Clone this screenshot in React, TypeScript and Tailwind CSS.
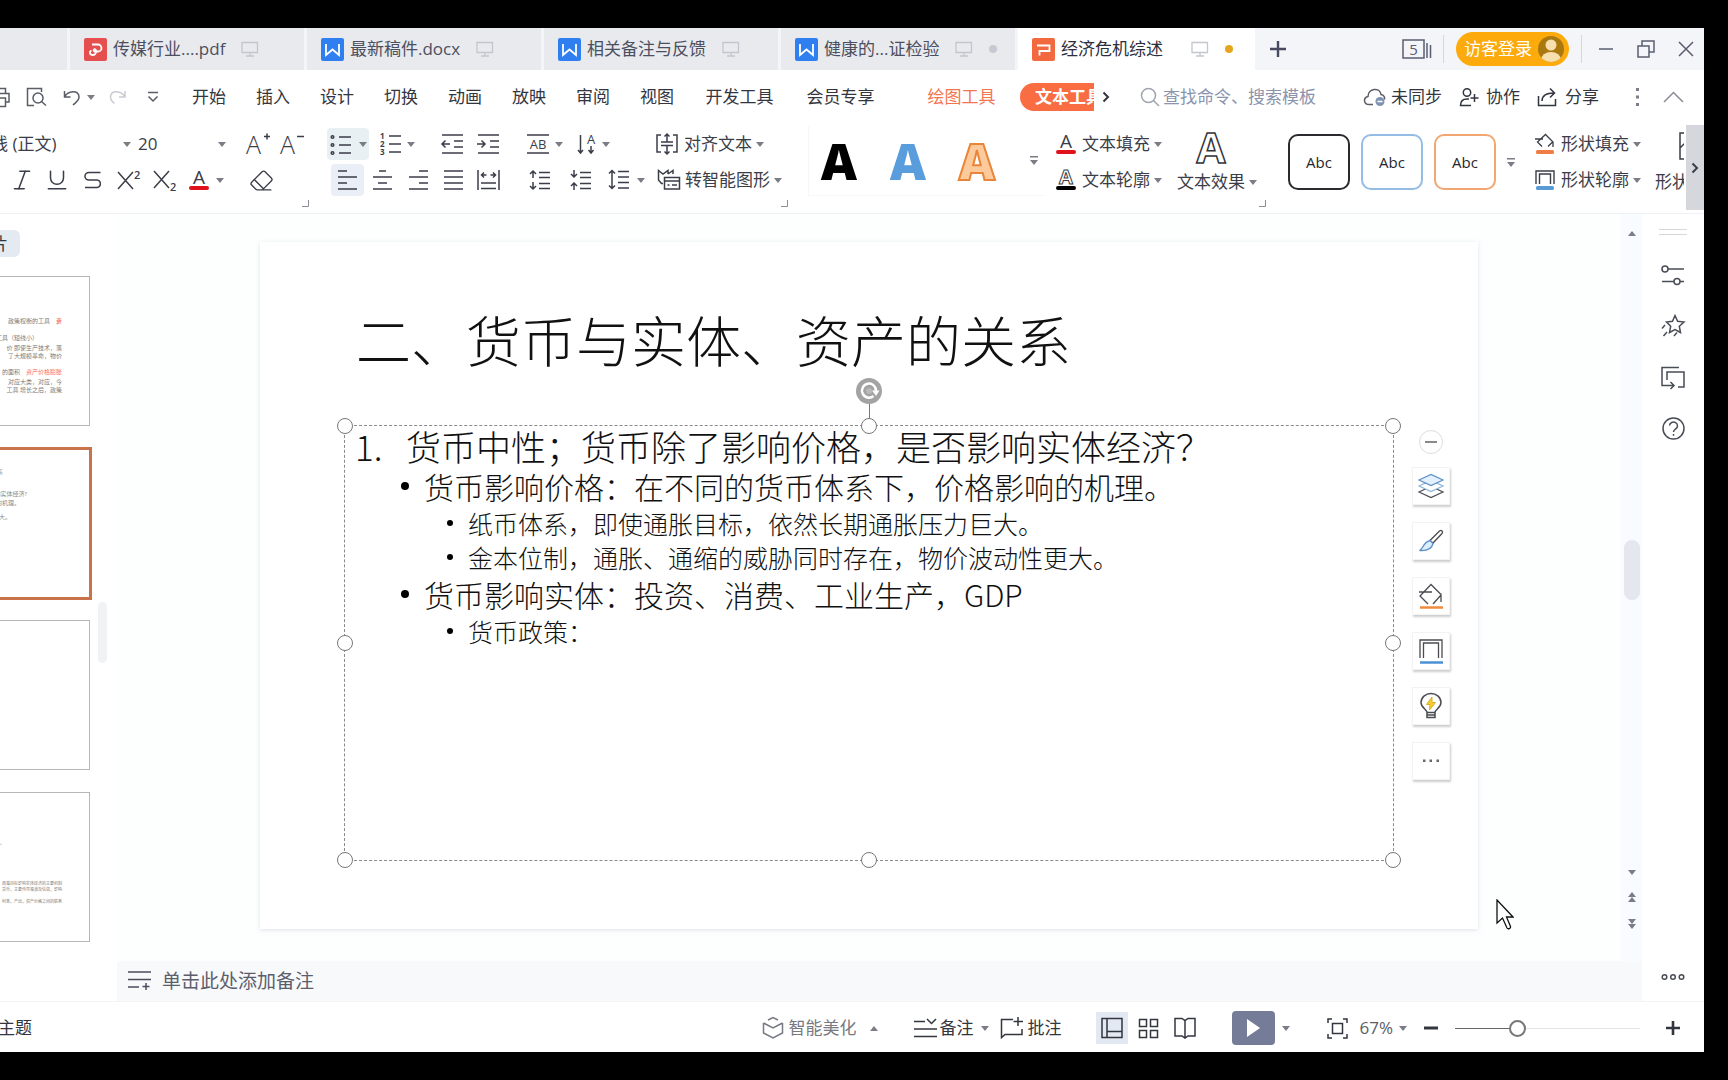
import React from "react";
import { Italic, Underline, Eraser } from "lucide-react";

type Kids = { children?: React.ReactNode };

function Ico({ w = 22, h = 22, sw = 1.5, children }: Kids & { w?: number; h?: number; sw?: number }) {
  return (
    <svg width={w} height={h} viewBox={`0 0 ${w} ${h}`} fill="none" stroke="currentColor" strokeWidth={sw} className="shrink-0 overflow-visible" aria-hidden="true">
      {children}
    </svg>
  );
}

function Caret({ up = false }: { up?: boolean }) {
  return (
    <svg width="8" height="5" viewBox="0 0 8 5" className="shrink-0" fill="#7b7d86" aria-hidden="true">
      <path d={up ? "M0 5h8L4 0z" : "M0 0h8L4 5z"} />
    </svg>
  );
}

function Tool({ label, className = "", children }: Kids & { label: string; className?: string }) {
  return (
    <button type="button" aria-label={label} className={`flex shrink-0 items-center justify-center ${className}`}>
      {children}
    </button>
  );
}

function Corner() {
  return (
    <svg width="7" height="7" viewBox="0 0 7 7" className="mt-[2px] ml-auto" fill="none" stroke="#8d8f98" aria-hidden="true">
      <path d="M6.5 0v6.5H0" />
    </svg>
  );
}

function More() {
  return (
    <svg width="8" height="9" viewBox="0 0 8 9" fill="#7b7d86" aria-hidden="true">
      <path d="M0 0h8v1.5H0zM0 4h8L4 9z" />
    </svg>
  );
}

/* ---------- title tabs ---------- */

function Monitor() {
  return (
    <span className="text-[#c3c6cf]">
      <Ico w={18} h={18} sw={1.3}>
        <path d="M1 2.5h15.5v10H1zM9 12.5v3M5 16h8" />
      </Ico>
    </span>
  );
}

function DocLogo({ kind }: { kind: "pdf" | "word" | "ppt" }) {
  const bg = kind === "pdf" ? "#e5504f" : kind === "word" ? "#2f7ff0" : "#f2683f";
  return (
    <svg width="23" height="23" viewBox="0 0 23 23" className="shrink-0" fill="none" stroke="#fff" strokeWidth="1.8" aria-hidden="true">
      <rect width="23" height="23" rx="2" fill={bg} stroke="none" />
      {kind === "pdf" && <path d="M8 6.5h6a3.4 3.4 0 0 1 0 7h-3.200c-1.500 0-1.500-2.400 0-2.400 2 0 1.800 5.900-2 5.900-3.300 0-3.800-4-1.200-4.300" />}
      {kind === "word" && <path d="M5 6v11l6.500-5.500L18 17V6" />}
      {kind === "ppt" && <path d="M5 7.500h12.500v5.500H7.500v4.500" />}
    </svg>
  );
}

function DocTab({ kind, name, active = false, dot = "" }: { kind: "pdf" | "word" | "ppt"; name: string; active?: boolean; dot?: string }) {
  return (
    <button
      type="button"
      role="tab"
      aria-selected={active}
      className={`flex w-[237px] shrink-0 items-center pl-[14px] text-[17px] ${
        active ? "bg-white text-[#2d2f3c]" : "border-r-3 border-[#f3f5f7] bg-[#e8eaee] text-[#4c4f60]"
      }`}
    >
      <DocLogo kind={kind} />
      <span className="ml-[6px] whitespace-nowrap">{name}</span>
      <span className={active ? "ml-7" : "ml-4"}>
        <Monitor />
      </span>
      {dot && <span className={`ml-4 size-2 rounded-full ${active ? "bg-[#e6a51c]" : "bg-[#c7c9d2]"}`} />}
    </button>
  );
}

function TitleBar() {
  return (
    <header className="flex h-[42px] shrink-0 bg-[#f3f5f9]">
      <div role="tablist" className="flex shrink-0">
        <div className="w-[70px] border-r-3 border-[#f3f5f7] bg-[#e8eaee]" />
        <DocTab kind="pdf" name="传媒行业....pdf" />
        <DocTab kind="word" name="最新稿件.docx" />
        <DocTab kind="word" name="相关备注与反馈" />
        <DocTab kind="word" name="健康的...证检验" dot="idle" />
        <DocTab kind="ppt" name="经济危机综述" active dot="edited" />
      </div>
      <Tool label="新建" className="w-[46px] text-[#474a60]">
        <Ico w={18} h={18} sw={2.4}>
          <path d="M9 1v16M1 9h16" />
        </Ico>
      </Tool>
      <div className="ml-auto flex items-center text-[#5a5d70]">
        <Tool label="窗口列表" className="h-8 w-9">
          <Ico w={30} h={20} sw={1.5}>
            <path d="M1 1h21v18H1zM25 4v15M28.500 6v13" />
            <text x="11.500" y="15.500" fontSize="15" textAnchor="middle" fill="currentColor" stroke="none">
              5
            </text>
          </Ico>
        </Tool>
        <span className="ml-2 h-7 w-px bg-[#d5d7de]" />
        <button type="button" className="ml-3 flex h-[34px] items-center rounded-full bg-[#fcaa0c] pr-[5px] pl-2 text-[17px] text-white">
          访客登录
          <svg width="26" height="26" viewBox="0 0 26 26" className="ml-[6px]" aria-hidden="true">
            <clipPath id="avatar">
              <circle cx="13" cy="13" r="13" />
            </clipPath>
            <g clipPath="url(#avatar)">
              <rect width="26" height="26" fill="#a9780f" />
              <circle cx="13" cy="9" r="5.500" fill="#f7dfae" />
              <ellipse cx="13" cy="24" rx="10" ry="8" fill="#f7dfae" />
            </g>
          </svg>
        </button>
        <span className="ml-3 h-7 w-px bg-[#d5d7de]" />
        <Tool label="最小化" className="ml-1 w-10">
          <Ico w={14} h={18}>
            <path d="M0 9h14" />
          </Ico>
        </Tool>
        <Tool label="还原" className="w-10">
          <Ico w={18} h={18}>
            <path d="M1 6h11v11H1zM5 6V1h12v11h-5" />
          </Ico>
        </Tool>
        <Tool label="关闭" className="mr-[-2px] w-10">
          <Ico w={16} h={16}>
            <path d="M1 1l14 14M15 1L1 15" />
          </Ico>
        </Tool>
      </div>
    </header>
  );
}

/* ---------- menu ---------- */

const menuShort = ["开始", "插入", "设计", "切换", "动画", "放映", "审阅", "视图"];
const menuLong = ["开发工具", "会员专享"];

function MenuBar() {
  return (
    <nav className="flex h-[54px] shrink-0 items-center text-[17px] text-[#33353f]">
      <div className="flex w-[177px] shrink-0 items-center text-[#5a5c66]">
        <Tool label="打印" className="-ml-[10px]">
          <Ico w={21} h={21}>
            <path d="M5 6V1.500h10.500V6M5 15H2V6.500h17V15h-3.500M5.500 11h10v8.500h-10z" />
          </Ico>
        </Tool>
        <Tool label="打印预览" className="ml-[14px]">
          <Ico w={22} h={20}>
            <path d="M9 18.500H2.500v-17h14V5" />
            <circle cx="13" cy="11" r="5" />
            <path d="M16.500 14.500l4.500 4" />
          </Ico>
        </Tool>
        <Tool label="撤销" className="ml-4 gap-[6px]">
          <Ico w={18} h={18}>
            <path d="M1.500 3v6h6M1.500 9C5 2.500 16 1.500 16 9c0 4-4 6-6 8" />
          </Ico>
          <Caret />
        </Tool>
        <Tool label="恢复" className="ml-[14px] text-[#c9cbd2]">
          <Ico w={18} h={18}>
            <path d="M16 3v6h-6M16 9C12.500 2.500 1.500 1.500 1.500 9c0 3 2 5 4 6.500" />
          </Ico>
        </Tool>
        <Tool label="自定义" className="ml-5">
          <Ico w={12} h={12}>
            <path d="M1 1.500h10M1.500 5.500L6 10l4.500-4.500" />
          </Ico>
        </Tool>
      </div>
      {menuShort.map((m) => (
        <button type="button" key={m} className="w-16 shrink-0 text-center">
          {m}
        </button>
      ))}
      {menuLong.map((m) => (
        <button type="button" key={m} className="w-[101px] shrink-0 text-center">
          {m}
        </button>
      ))}
      <button type="button" className="ml-5 w-[101px] shrink-0 text-center text-[#f2754f]">
        绘图工具
      </button>
      <button type="button" className="ml-2 h-7 w-[74px] shrink-0 overflow-hidden rounded-l-full bg-[#fa6c42] pl-[15px] text-left font-bold whitespace-nowrap text-white">
        文本工具
      </button>
      <Tool label="更多选项卡" className="w-6">
        <Ico w={8} h={12} sw={2}>
          <path d="M1.500 1.500L6 6l-4.500 4.500" />
        </Ico>
      </Tool>
      <label className="ml-[22px] flex items-center gap-[3px] text-[#a0a4b0]">
        <Ico w={20} h={20}>
          <circle cx="8.500" cy="8.500" r="7" />
          <path d="M13.500 13.500l5.500 5.500" />
        </Ico>
        <input aria-label="查找命令" placeholder="查找命令、搜索模板" className="w-[170px] bg-transparent text-[17px] outline-none placeholder:text-[#8b93ad]" />
      </label>
      <div className="ml-auto flex items-center">
        <button type="button" className="flex items-center gap-[5px]">
          <svg width="23" height="20" viewBox="0 0 23 20" fill="none" stroke="#5a5c66" strokeWidth="1.500" aria-hidden="true">
            <path d="M10 17.500H6C1 17.500-.5 11 5 9.500 5 1 17 0 18 7.500c3 .5 4 3 3.500 5" />
            <circle cx="17" cy="14.500" r="4.500" fill="#7f93b3" stroke="none" />
            <path d="M14.500 14.500h5" stroke="#fff" />
          </svg>
          未同步
        </button>
        <button type="button" className="ml-[17px] flex items-center gap-[7px]">
          <Ico w={20} h={20}>
            <circle cx="8" cy="5.500" r="3.700" />
            <path d="M12 18.500H1.500C1.500 13.500 4 12 8 12h2M15.500 7v8M11.500 11h8" />
          </Ico>
          协作
        </button>
        <button type="button" className="ml-[17px] flex items-center gap-[7px]">
          <Ico w={21} h={20}>
            <path d="M1.500 9v9.500h17V12M5 14c0-6 4-8 12-8M13 1.500L17.500 6 13 10.500" />
          </Ico>
          分享
        </button>
        <Tool label="更多" className="ml-[26px] w-6">
          <svg width="3" height="18" viewBox="0 0 3 18" fill="#7b7d88" aria-hidden="true">
            <path d="M0 0h3v3H0zM0 7.500h3v3H0zM0 15h3v3H0z" />
          </svg>
        </Tool>
        <Tool label="收起功能区" className="mr-5 ml-[14px] text-[#8b8d96]">
          <Ico w={21} h={12}>
            <path d="M1 11l9.500-9.500L20 11" />
          </Ico>
        </Tool>
      </div>
    </nav>
  );
}

/* ---------- ribbon ---------- */

const row = "flex h-9 items-center";

function FontGroup() {
  return (
    <section className="w-[309px] shrink-0">
      <div className={row}>
        <div className="w-[120px] overflow-hidden">
          <select aria-label="字体" className="-ml-[26px] w-[146px] appearance-none bg-transparent">
            <option>等线 (正文)</option>
          </select>
        </div>
        <span className="flex w-[13px] justify-center">
          <Caret />
        </span>
        <select aria-label="字号" className="ml-[5px] w-[78px] appearance-none bg-transparent">
          <option>20</option>
        </select>
        <span className="flex w-3 justify-center">
          <Caret />
        </span>
        <Tool label="增大字号" className="ml-3 w-[34px]">
          <Ico w={22} h={24}>
            <text x="0" y="22" fontSize="25" className="font-light" fill="currentColor" stroke="none">
              A
            </text>
            <path d="M18 4.500h6M21 1.500v6" />
          </Ico>
        </Tool>
        <Tool label="减小字号" className="w-[34px]">
          <Ico w={23} h={24}>
            <text x="0" y="22" fontSize="25" className="font-light" fill="currentColor" stroke="none">
              A
            </text>
            <path d="M17 4.500h7" />
          </Ico>
        </Tool>
      </div>
      <div className={row}>
        <Tool label="倾斜" className="ml-2 w-7">
          <Italic size={26} strokeWidth={1.4} />
        </Tool>
        <Tool label="下划线" className="ml-[7px] w-7">
          <Underline size={26} strokeWidth={1.4} />
        </Tool>
        <Tool label="删除线" className="ml-2 w-7">
          <Ico w={20} h={22}>
            <path d="M17.500 3.500H6a4 3.700 0 0 0 0 7.500h8a4 3.800 0 0 1 0 7.500H2" />
          </Ico>
        </Tool>
        <Tool label="上标" className="ml-2 w-7">
          <Ico w={24} h={22}>
            <path d="M1 3l15 17M16 3L1 20" />
            <text x="17" y="10" fontSize="11" className="font-semibold" fill="currentColor" stroke="none">
              2
            </text>
          </Ico>
        </Tool>
        <Tool label="下标" className="ml-2 w-7">
          <Ico w={24} h={22}>
            <path d="M1 2l15 17M16 2L1 19" />
            <text x="17" y="22" fontSize="11" className="font-semibold" fill="currentColor" stroke="none">
              2
            </text>
          </Ico>
        </Tool>
        <Tool label="字体颜色" className="ml-[10px] gap-[7px]">
          <LetterBar bar="#e0121c" />
          <Caret />
        </Tool>
        <Tool label="清除格式" className="ml-[23px] w-7">
          <Eraser size={25} strokeWidth={1.300} />
        </Tool>
      </div>
      <Corner />
    </section>
  );
}

function LetterBar({ bar, outline = false }: { bar: string; outline?: boolean }) {
  return (
    <Ico w={20} h={22}>
      {outline ? (
        <text x="10" y="15" fontSize="20" textAnchor="middle" className="font-bold" fill="#fff" stroke="currentColor" strokeWidth="1">
          A
        </text>
      ) : (
        <text x="10" y="15" fontSize="19" textAnchor="middle" fill="currentColor" stroke="none">
          A
        </text>
      )}
      <rect x="0" y="17" width="20" height="4" rx="2" fill={bar} stroke="none" />
    </Ico>
  );
}

function ParagraphGroup() {
  return (
    <section className="w-[479px] shrink-0">
      <div className={row}>
        <Tool label="项目符号" className="ml-[18px] h-8 w-[42px] gap-2 rounded-sm bg-[#e9f0f4]">
          <Ico w={21} h={21}>
            <circle cx="2.500" cy="3" r="1.300" />
            <circle cx="2.500" cy="11" r="1.300" />
            <circle cx="2.500" cy="19" r="1.300" />
            <path d="M9 3h12M9 11h12M9 19h12" />
          </Ico>
          <Caret />
        </Tool>
        <Tool label="编号" className="ml-[7px] w-[42px] gap-[6px]">
          <Ico w={21} h={22}>
            <g fill="currentColor" stroke="none" fontSize="8" className="font-bold">
              <text x="0" y="6">1</text>
              <text x="0" y="14">2</text>
              <text x="0" y="22">3</text>
            </g>
            <path d="M9 3h12M9 11h12M9 19h12" />
          </Ico>
          <Caret />
        </Tool>
        <Tool label="减少缩进" className="ml-4 w-[36px]">
          <Ico w={23} h={20}>
            <path d="M1 1h21M13 7h9M13 13h9M1 19h21M1 10h8M4.500 6.500L1 10l3.500 3.500" />
          </Ico>
        </Tool>
        <Tool label="增加缩进" className="w-9">
          <Ico w={23} h={20}>
            <path d="M1 1h21M13 7h9M13 13h9M1 19h21M0 10h8M4.500 6.500L8 10l-3.500 3.500" />
          </Ico>
        </Tool>
        <Tool label="分散对齐" className="ml-[17px] w-11 gap-[6px]">
          <Ico w={22} h={20}>
            <path d="M0 1h22M0 19h22" />
            <text x="11" y="15" fontSize="13" textAnchor="middle" fill="currentColor" stroke="none">
              AB
            </text>
          </Ico>
          <Caret />
        </Tool>
        <Tool label="文字方向" className="ml-[6px] w-10 gap-[6px]">
          <Ico w={19} h={22}>
            <path d="M3.500 2v18M1 17l2.500 3L6 17M14 13v7M11.500 17l2.500 3 2.500-3" />
            <text x="14" y="11" fontSize="13" textAnchor="middle" fill="currentColor" stroke="none">
              A
            </text>
          </Ico>
          <Caret />
        </Tool>
        <Tool label="对齐文本" className="ml-[43px]">
          <Ico w={22} h={22}>
            <path d="M5 2H1v17h4M17 2h4v17h-4M5 9h12M5 12.500h12M11 9V1M8.500 3.500L11 1l2.500 2.500M11 13v8M8.500 18.500L11 21l2.500-2.500" />
          </Ico>
          <span className="mr-1 ml-[6px]">对齐文本</span>
          <Caret />
        </Tool>
      </div>
      <div className={row}>
        <Tool label="左对齐" className="ml-[22px] h-8 w-[33px] rounded-sm bg-[#eaeff7]">
          <Ico w={21} h={20}>
            <path d="M1 1h9M1 7h19M1 13h9M1 19h19" />
          </Ico>
        </Tool>
        <Tool label="居中对齐" className="w-9">
          <Ico w={21} h={20}>
            <path d="M7 1h7M1 7h19M6 13h9M1 19h19" />
          </Ico>
        </Tool>
        <Tool label="右对齐" className="w-9">
          <Ico w={21} h={20}>
            <path d="M11 1h9M1 7h19M11 13h9M1 19h19" />
          </Ico>
        </Tool>
        <Tool label="两端对齐" className="w-[34px]">
          <Ico w={21} h={20}>
            <path d="M1 1h19M1 7h19M1 13h19M1 19h19" />
          </Ico>
        </Tool>
        <Tool label="分散对齐" className="w-9">
          <Ico w={23} h={20}>
            <path d="M1 0v20M22 0v20M4 13h15M4 18.500h15M4.500 5h5M13.500 5h5M7 2.500L4.500 5 7 7.500M16 2.500L18.500 5 16 7.500" />
          </Ico>
        </Tool>
        <Tool label="增大段落间距" className="ml-[14px] w-10">
          <Ico w={22} h={22}>
            <path d="M10 3.500h11M10 8.500h11M10 14.500h11M10 19.500h11M4 9V2M1 5l3-3 3 3M4 13v7M1 17l3 3 3-3" />
          </Ico>
        </Tool>
        <Tool label="减小段落间距" className="w-[42px]">
          <Ico w={22} h={22}>
            <path d="M10 3.500h11M10 8.500h11M10 14.500h11M10 19.500h11M4 1v7M1 5l3 3 3-3M4 21v-7M1 17l3-3 3 3" />
          </Ico>
        </Tool>
        <Tool label="行距" className="ml-[6px] gap-[7px]">
          <Ico w={22} h={22}>
            <path d="M10 2.500h11M10 8h11M10 13.500h11M10 19h11M4 1.500v18M1 4.500l3-3 3 3M1 16.500l3 3 3-3" />
          </Ico>
          <Caret />
        </Tool>
        <Tool label="转智能图形" className="ml-3">
          <Ico w={23} h={22}>
            <path d="M6 14.500H4.500L1.500 11V1.500L6 5l5-3.500V5M16 5V1.500L11 5M7.500 8.500h15v11.500h-15zM7.500 12h15M10.500 16h2M15 16h5" />
          </Ico>
          <span className="mr-1 ml-[5px]">转智能图形</span>
          <Caret />
        </Tool>
      </div>
      <Corner />
    </section>
  );
}

function TextStyles() {
  return (
    <section className="ml-5 flex h-[70px] w-[236px] shrink-0 items-center border-b border-l border-[#f7f7f9] text-[50px] leading-none font-extrabold">
      <Tool label="黑色艺术字" className="w-[66px] pr-[6px] text-black">
        A
      </Tool>
      <Tool label="蓝色艺术字" className="w-[68px] pr-[2px] text-[#5a9ddc]">
        A
      </Tool>
      <Tool label="橙色艺术字" className="w-[68px] text-[#fdcb9b] [-webkit-text-stroke:2px_#ea8438]">
        A
      </Tool>
      <Tool label="更多样式" className="ml-auto w-5">
        <More />
      </Tool>
    </section>
  );
}

function FillRow({ icon, text }: { icon: React.ReactNode; text: string }) {
  return (
    <div className={row}>
      <Tool label={text}>
        {icon}
        <span className="mr-1 ml-[6px] whitespace-nowrap">{text}</span>
        <Caret />
      </Tool>
    </div>
  );
}

function ShapeFillIcon({ bar = "#ef7d45" }: { bar?: string }) {
  return (
    <Ico w={20} h={22}>
      <path d="M7 13.500L2.500 9 10.500 1.500l7.500 7.500v5M13 13.500l5-5M0 6h8" strokeWidth={1.300} />
      <rect x="1" y="17" width="18" height="4" rx="1.500" fill={bar} stroke="none" />
    </Ico>
  );
}

function ShapeOutlineIcon() {
  return (
    <Ico w={20} h={22}>
      <path d="M1 15V2h18v13M4.500 15V5h11v10" strokeWidth={1.400} />
      <rect x="1" y="17" width="18" height="4" rx="1.500" fill="#5b9bd5" stroke="none" />
    </Ico>
  );
}

function Ribbon() {
  return (
    <div className="flex h-[90px] shrink-0 border-b border-[#eff0f3] pt-[2px] text-[17px] text-[#3b3d48]">
      <div className="flex min-w-0 flex-1 overflow-hidden">
        <FontGroup />
        <ParagraphGroup />
        <TextStyles />
        <section className="ml-3 w-[112px] shrink-0">
          <FillRow icon={<LetterBar bar="#e0121c" />} text="文本填充" />
          <FillRow icon={<LetterBar bar="#000" outline />} text="文本轮廓" />
        </section>
        <section className="ml-1 w-[94px] shrink-0">
          <button type="button" className="flex h-[72px] w-[90px] flex-col items-center">
            <span className="mr-3 h-9 text-[42px] leading-[42px] font-bold text-white [-webkit-text-stroke:1.5px_#33353d]">A</span>
            <span className="flex h-9 items-center gap-1 pt-1 whitespace-nowrap">
              文本效果
              <Caret />
            </span>
          </button>
          <Corner />
        </section>
        <section className="ml-[22px] flex h-[72px] shrink-0 items-center gap-[11px] text-[15px] text-[#26272e]">
          <button type="button" className="h-14 w-[62px] rounded-[10px] border-2 border-[#2b2b2f]">Abc</button>
          <button type="button" className="h-14 w-[62px] rounded-[10px] border-2 border-[#94bce4]">Abc</button>
          <button type="button" className="h-14 w-[62px] rounded-[10px] border-2 border-[#f2a772]">Abc</button>
          <Tool label="更多形状样式" className="w-2">
            <More />
          </Tool>
        </section>
        <section className="ml-5 w-[112px] shrink-0">
          <FillRow icon={<ShapeFillIcon />} text="形状填充" />
          <FillRow icon={<ShapeOutlineIcon />} text="形状轮廓" />
        </section>
        <section className="ml-2 w-[29px] shrink-0 overflow-hidden">
          <button type="button" className="flex w-[70px] flex-col">
            <span className="flex h-9 items-center pt-1 pl-6">
              <Ico w={30} h={28}>
                <path d="M1 1h28v26H1zM1 16l8-8" />
              </Ico>
            </span>
            <span className="flex h-9 items-center pt-1 whitespace-nowrap">形状效果</span>
          </button>
        </section>
      </div>
      <Tool label="向右滚动" className="-mt-px h-[85px] w-[18px] bg-[#d5d7dd] text-[#3b3d48]">
        <Ico w={8} h={12} sw={2}>
          <path d="M1.500 1.500L6 6l-4.500 4.500" />
        </Ico>
      </Tool>
    </div>
  );
}

/* ---------- slide list ---------- */

function Thumb({ children }: Kids) {
  return (
    <button type="button" className="flex h-[150px] w-[90px] shrink-0 flex-col items-start overflow-hidden border-t border-r border-b border-[#b4b6ba] text-[6px] text-[#7a7a7a]">
      {children}
    </button>
  );
}

function SlideList() {
  return (
    <aside className="flex w-[117px] shrink-0 flex-col text-[#35373f]">
      <div className="mt-4 flex h-[27px] w-5 items-center justify-end overflow-hidden rounded-r-md bg-[#e3eaf2] pr-3 text-[17px]">
        <span className="whitespace-nowrap">幻灯片</span>
      </div>
      <div className="flex min-h-0 flex-1">
        <div className="mt-[19px] flex w-[92px] flex-col">
          <Thumb>
            <div className="mt-[40px] flex w-[62px] flex-col items-end text-right leading-[9px] whitespace-nowrap">
              <p>
                政策权衡的工具　<span className="text-[#ef4d4d]">贵</span>
              </p>
              <p className="mt-2 mr-6">工具（短线小）</p>
              <div className="mt-px leading-[8px]">
                <p>价 即使生产技术，落</p>
                <p>了大规模革命，物价</p>
              </div>
              <p className="mt-2">
                的面积　<span className="text-[#ff6b6b]">资产价格膨胀</span>
              </p>
              <div className="mt-px leading-[8px]">
                <p>对应大类，对应，今</p>
                <p>工具 增长之后，政策</p>
              </div>
            </div>
          </Thumb>
          <button type="button" className="mt-[21px] flex h-[153px] w-[92px] flex-col items-start overflow-hidden border-3 border-l-0 border-[#c8734a] text-[6px] leading-[8px] text-[#8b8b8b]">
            <span className="mt-[18px] flex w-[3px] justify-end">系</span>
            <span className="mt-[14px] flex w-[27px] justify-end whitespace-nowrap">响实体经济?</span>
            <span className="mt-px flex w-5 justify-end whitespace-nowrap">的机理。</span>
            <span className="mt-[6px] flex w-[11px] justify-end whitespace-nowrap">更大。</span>
          </button>
          <div className="mt-5 flex">
            <Thumb />
          </div>
          <div className="mt-[22px] flex">
            <Thumb>
              <div className="mt-[48px] flex w-[62px] flex-col items-end text-[4px] leading-[6px] whitespace-nowrap">
                <p className="mr-[58px]">系。</p>
                <p className="mt-[34px]">政策目标影响实体经济的主要机制</p>
                <p>货币，主要传导渠道及信贷，影响</p>
                <p className="mt-[6px]">利率，产出，资产价格之间的联系</p>
              </div>
            </Thumb>
          </div>
        </div>
        <div className="mt-[345px] ml-[6px] h-[61px] w-[9px] rounded-full bg-[#f1f2f4]" />
      </div>
    </aside>
  );
}

/* ---------- slide ---------- */

const handles = [
  "left-0 top-0",
  "left-1/2 top-0",
  "left-full top-0",
  "left-0 top-1/2",
  "left-full top-1/2",
  "left-0 top-full",
  "left-1/2 top-full",
  "left-full top-full",
];

const l2 = "flex items-center text-[30px] leading-[40px]";
const l3 = "flex items-center text-[25px] leading-[34px]";

function Bullet({ small = false }: { small?: boolean }) {
  return small ? (
    <span className="mr-[15px] ml-[102px] size-[6px] rounded-full bg-black" />
  ) : (
    <span className="mr-[15px] ml-[56px] size-2 rounded-full bg-black" />
  );
}

function TextBody() {
  return (
    <div className="relative mt-[43px] h-[436px] border border-dashed border-[#8a8a8a] text-[#111] font-light">
      <ol className="whitespace-nowrap">
        <li>
          <p className="flex text-[35px] leading-[40px]">
            <span className="ml-[10px] w-[51px]">1.</span>货币中性；货币除了影响价格，是否影响实体经济？
          </p>
          <ul>
            <li>
              <p className={l2}>
                <Bullet />
                货币影响价格：在不同的货币体系下，价格影响的机理。
              </p>
              <ul>
                <li className={l3}>
                  <Bullet small />
                  纸币体系，即使通胀目标，依然长期通胀压力巨大。
                </li>
                <li className={l3}>
                  <Bullet small />
                  金本位制，通胀、通缩的威胁同时存在，物价波动性更大。
                </li>
              </ul>
            </li>
            <li>
              <p className={l2}>
                <Bullet />
                货币影响实体：投资、消费、工业生产，GDP
              </p>
              <ul>
                <li className={l3}>
                  <Bullet small />
                  货币政策：
                </li>
              </ul>
            </li>
          </ul>
        </li>
      </ol>
      <span className="absolute -top-6 left-1/2 h-6 w-px bg-[#777]" />
      <svg width="26" height="26" viewBox="0 0 26 26" className="absolute -top-12 left-1/2 -translate-x-1/2" fill="none" aria-hidden="true">
        <circle cx="13" cy="13" r="13" fill="#a3a3a3" />
        <path d="M17.500 18A7 7 0 1 1 20 13" stroke="#fff" strokeWidth="2.500" />
        <circle cx="13" cy="13" r="3" fill="#fff" fillOpacity="0.25" />
        <path d="M16 12.500h7.500L20 18z" fill="#fff" />
      </svg>
      {handles.map((h) => (
        <span key={h} className={`absolute size-4 -translate-1/2 rounded-full border border-[#777] bg-white ${h}`} />
      ))}
    </div>
  );
}

function FloatTools() {
  const box = "flex size-[38px] items-center justify-center border border-[#f3f3f3] bg-white shadow-[1px_2px_2px_rgba(0,0,0,0.2)]";
  return (
    <div className="absolute top-[188px] right-[28px] flex flex-col items-center gap-[17px] text-[#4a4c52]">
      <button type="button" aria-label="收起" className="mb-[-4px] flex size-6 items-center justify-center rounded-full border border-[#ddd] bg-white">
        <span className="h-[2px] w-3 bg-[#8a8a8a]" />
      </button>
      <button type="button" aria-label="叠放次序" className={box}>
        <Ico w={26} h={26} sw={1.200}>
          <path d="M1 19l12-5.500L25 19l-12 5.500z" fill="#fff" />
          <path d="M1 13l12-5.500L25 13l-12 5.500z" fill="#fff" stroke="#8fb3d9" />
          <path d="M1 7l12-5.500L25 7l-12 5.500z" fill="#e2f1fd" stroke="#5d8fc7" />
        </Ico>
      </button>
      <button type="button" aria-label="形状样式" className={box}>
        <Ico w={26} h={26} sw={1.300}>
          <path d="M12 12.500L21.500 3c2-1.500 4 .5 2.500 2.500L15 15z" />
          <path d="M12 12.500l3 3c-1 5-6 7.500-13.500 7 4-1.500 3-8 10.500-10z" fill="#ddeefb" stroke="#5d8fc7" />
        </Ico>
      </button>
      <button type="button" aria-label="形状填充" className={box}>
        <Ico w={26} h={26} sw={1.300}>
          <path d="M10 21l-8-8L13 1.500l10 10M15 21l8-9v7M1 9h13" />
          <path d="M2 24.500h23" stroke="#ee8d42" strokeWidth="2.500" />
        </Ico>
      </button>
      <button type="button" aria-label="形状轮廓" className={box}>
        <Ico w={26} h={26} sw={1.300}>
          <path d="M2 20V2h22v18M5.500 20V5h15v15" />
          <path d="M2 24.500h23" stroke="#4d90d3" strokeWidth="2.500" />
        </Ico>
      </button>
      <button type="button" aria-label="智能特性" className={box}>
        <Ico w={26} h={26} sw={1.500}>
          <path d="M9 19.500c0-3-6-4.500-6-10a10 9 0 0 1 20 0c0 5.500-6 7-6 10zM9 19.500v5h8v-5M9 22h8" />
          <path d="M14 4L8.500 11.500h3.500L11.500 17l6-7.500H14z" fill="#f6cf2f" stroke="#d9ae2c" strokeWidth="1" />
        </Ico>
      </button>
      <button type="button" aria-label="更多" className={box}>
        <svg width="18" height="4" viewBox="0 0 18 4" fill="#66676d" aria-hidden="true">
          <path d="M1 .5h2.500v2.500H1zM7.500 .5h2.500v2.500h-2.500zM14.500 .5h2.500v2.500h-2.500z" />
        </svg>
      </button>
    </div>
  );
}

function Canvas() {
  return (
    <div className="relative flex min-h-0 flex-1">
      <div className="flex min-w-0 flex-1 justify-center bg-[#fdfefe] pt-7">
        <article className="relative h-[687px] w-full max-w-[1218px] bg-white px-[84px] shadow-[0_1px_4px_rgba(120,150,180,0.25)]">
          <h1 className="mt-[54px] mb-[45px] ml-3 h-[84px] text-[55px] leading-[84px] font-light whitespace-nowrap text-[#111]">二、货币与实体、资产的关系</h1>
          <TextBody />
          <FloatTools />
        </article>
      </div>
      <div className="flex w-[21px] shrink-0 flex-col items-center bg-[#f8fbff]">
        <button type="button" aria-label="向上滚动" className="mt-[17px]">
          <Caret up />
        </button>
        <div className="mt-[304px] h-[60px] w-4 rounded-full bg-[#e4e7ee]" />
        <button type="button" aria-label="向下滚动" className="mt-auto flex">
          <Caret />
        </button>
        <button type="button" aria-label="上一张" className="mt-[17px] flex flex-col">
          <Caret up />
          <Caret up />
        </button>
        <button type="button" aria-label="下一张" className="mt-[17px] mb-8 flex flex-col">
          <Caret />
          <Caret />
        </button>
      </div>
      <svg width="18" height="32" viewBox="0 0 18 32" className="absolute right-[128px] bottom-[30px]" fill="#fff" stroke="#111" strokeWidth="1.300" aria-hidden="true">
        <path d="M1 1v23l5.500-5 4.500 10c1 1.500 4 .5 3.500-1.500L10.500 18H17z" />
      </svg>
    </div>
  );
}

function SideTools() {
  return (
    <aside className="flex w-[62px] shrink-0 flex-col items-center text-[#4a4c56]">
      <span className="mt-[15px] h-[6px] w-7 border-y border-[#d8d8dc]" />
      <Tool label="对象属性" className="mt-7 size-6">
        <Ico w={24} h={22}>
          <circle cx="4" cy="5" r="3" />
          <circle cx="16" cy="17.500" r="3" />
          <path d="M7 5h16M1 17.500h12M19 17.500h4" />
        </Ico>
      </Tool>
      <Tool label="动画" className="mt-[27px] size-6">
        <Ico w={24} h={24}>
          <path d="M14 1.500l2.600 5.700 6.400.8-4.700 4.200 1.200 6.300-5.500-3-5.500 3 1.200-6.300L5.500 8l6-.8zM4 11l-3 3.500M6 18l-3.500 4M16 18.500L13 22" />
        </Ico>
      </Tool>
      <Tool label="幻灯片切换" className="mt-[27px] size-6">
        <Ico w={24} h={22}>
          <path d="M18 1.500H1v18h12M6 14V6h17v15h-6M9.500 16l3.500 3.500L9.500 23" />
        </Ico>
      </Tool>
      <Tool label="帮助" className="mt-[27px] size-6">
        <Ico w={23} h={23}>
          <circle cx="11.500" cy="11.500" r="10.500" />
          <path d="M7.500 8.500a4 3.700 0 1 1 6 3.500c-1.500 1-2 1.300-2 3M11.500 17v1.800" />
        </Ico>
      </Tool>
      <Tool label="更多任务窗格" className="mt-auto mb-5">
        <Ico w={24} h={8}>
          <circle cx="3.500" cy="4" r="2.300" />
          <circle cx="12" cy="4" r="2.300" />
          <circle cx="20.500" cy="4" r="2.300" />
        </Ico>
      </Tool>
    </aside>
  );
}

/* ---------- status bar ---------- */

function StatusBar() {
  return (
    <footer className="flex h-[50px] shrink-0 items-center pt-[2px] text-[17px] text-[#33353f]">
      <span className="-ml-[2px] whitespace-nowrap">主题</span>
      <div className="ml-auto flex shrink-0 items-center">
        <button type="button" className="flex items-center text-[#777983]">
          <Ico w={22} h={24}>
            <path d="M6 4l5-2.500L16 4M1.500 7v10l9.500 5 9.500-5V7M1.500 7l9.500 5 9.500-5" />
          </Ico>
          <span className="mr-[13px] ml-[5px]">智能美化</span>
          <Caret up />
        </button>
        <button type="button" className="ml-9 flex items-center">
          <Ico w={23} h={20}>
            <path d="M0 3.500h11M0 11h23M0 18.500h23M13 1l4.500 4.500L22 1" />
          </Ico>
          <span className="mr-[7px] ml-[3px]">备注</span>
          <Caret />
        </button>
        <button type="button" className="ml-[11px] flex items-center">
          <Ico w={24} h={24}>
            <path d="M13 3.500H1.500v18L5 18.500h17V13M18 1v9M13.500 5.500h9.500" />
          </Ico>
          <span className="ml-[4px]">批注</span>
        </button>
        <Tool label="普通视图" className="ml-[34px] size-8 bg-[#e3e9f2]">
          <Ico w={22} h={22}>
            <path d="M1 1.500h20v19H1zM6 1.500v19M6 14.500h15" />
          </Ico>
        </Tool>
        <Tool label="幻灯片浏览" className="ml-[5px] size-8">
          <Ico w={21} h={21}>
            <path d="M1.500 1.500h7v7h-7zM12.500 1.500h7v7h-7zM1.500 12.500h7v7h-7zM12.500 12.500h7v7h-7z" />
          </Ico>
        </Tool>
        <Tool label="阅读版式" className="ml-1 size-8">
          <Ico w={22} h={22}>
            <path d="M1 1.500h7l3 2 3-2h7V19h-7l-3 2-3-2H1zM11 3.500V20" />
          </Ico>
        </Tool>
        <Tool label="放映" className="ml-[31px] h-[34px] w-[43px] rounded-sm bg-[#757c97]">
          <svg width="13" height="18" viewBox="0 0 13 18" fill="#fff" aria-hidden="true">
            <path d="M0 0l13 9L0 18z" />
          </svg>
        </Tool>
        <Tool label="放映选项" className="ml-[7px]">
          <Caret />
        </Tool>
        <Tool label="适应窗口" className="ml-[37px]">
          <Ico w={21} h={21}>
            <path d="M1 5V1h4M16 1h4v4M20 16v4h-4M5 20H1v-4M5.500 5.500h10v10h-10z" />
          </Ico>
        </Tool>
        <Tool label="缩放比例" className="ml-3 gap-[6px] text-[#5a5c66]">
          67%
          <Caret />
        </Tool>
        <Tool label="缩小" className="ml-[17px]">
          <Ico w={14} h={14} sw={3}>
            <path d="M0 7h14" />
          </Ico>
        </Tool>
        <input
          type="range"
          aria-label="缩放"
          defaultValue={32}
          className="ml-[17px] h-5 w-[185px] appearance-none bg-transparent [&::-webkit-slider-runnable-track]:h-px [&::-webkit-slider-runnable-track]:bg-[linear-gradient(90deg,#666_0_33%,#e2e3e6_33%)] [&::-webkit-slider-thumb]:-mt-2 [&::-webkit-slider-thumb]:size-[17px] [&::-webkit-slider-thumb]:appearance-none [&::-webkit-slider-thumb]:rounded-full [&::-webkit-slider-thumb]:border-2 [&::-webkit-slider-thumb]:border-[#777] [&::-webkit-slider-thumb]:bg-white"
        />
        <Tool label="放大" className="mr-6 ml-[26px]">
          <Ico w={14} h={14} sw={2.600}>
            <path d="M0 7h14M7 0v14" />
          </Ico>
        </Tool>
      </div>
    </footer>
  );
}

export default function App() {
  return (
    <div className="flex h-screen flex-col bg-black py-7 pr-6 font-['Open_Sans','Noto_Sans_CJK_SC',sans-serif]">
      <div className="flex min-h-0 flex-1 flex-col overflow-hidden bg-white">
        <TitleBar />
        <MenuBar />
        <Ribbon />
        <div className="flex min-h-0 flex-1 border-b border-[#f3f4f6]">
          <SlideList />
          <main className="flex min-w-0 flex-1 flex-col font-['Noto_Sans_CJK_SC',sans-serif]">
            <Canvas />
            <label className="flex h-10 shrink-0 items-center bg-[#f8f9fb] pb-[2px] pl-[11px] text-[#4a4c5c]">
              <Ico w={23} h={20}>
                <path d="M0 2h23M0 9.500h23M0 17h11M18 13v7M14.500 16.500h7" />
              </Ico>
              <input aria-label="备注" placeholder="单击此处添加备注" className="ml-[11px] w-full bg-transparent text-[19px] outline-none placeholder:text-[#5c5e6c]" />
            </label>
          </main>
          <SideTools />
        </div>
        <StatusBar />
      </div>
    </div>
  );
}
